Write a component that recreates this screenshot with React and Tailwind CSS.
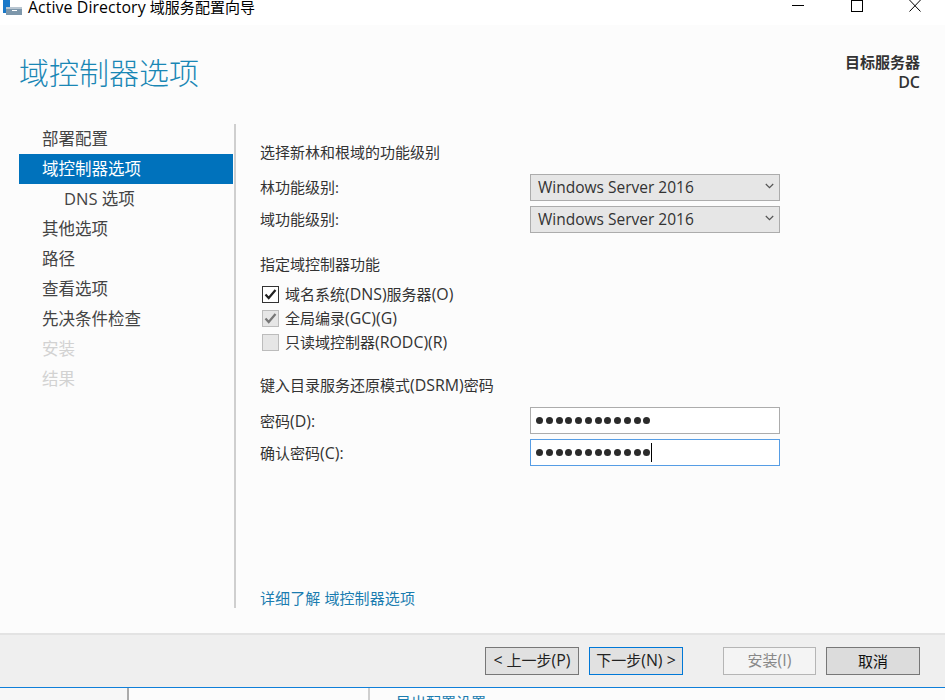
import React from 'react';

const FONT = 'font-["Open_Sans","Noto_Sans_CJK_SC",sans-serif]';

const navItems = [
  { label: '部署配置' },
  { label: '域控制器选项', active: true },
  { label: 'DNS 选项', sub: true },
  { label: '其他选项' },
  { label: '路径' },
  { label: '查看选项' },
  { label: '先决条件检查' },
  { label: '安装', disabled: true },
  { label: '结果', disabled: true },
];

// latin runs sit a little larger than the CJK around them in the original
const Mixed = ({ text }) =>
  text.split(/([\x21-\x7e]+(?: [\x21-\x7e]+)*)/).map((part, i) =>
    /[\x21-\x7e]/.test(part) ? (
      <span key={i} className="text-[1.06em]">{part}</span>
    ) : (
      part
    )
  );

const Chevron = () => (
  <svg width="9" height="6" viewBox="0 0 9 6" className="mr-[5px] mb-1" fill="none" stroke="#555" strokeWidth="1.2">
    <path d="M.8 1l3.7 3.7L8.2 1" />
  </svg>
);

const Select = ({ value }) => (
  <div className="w-[250px] h-[27px] flex items-center justify-between pl-[7px] bg-[#e6e6e6] border border-[#acacac] text-[15.5px] text-[#333]">
    <span>{value}</span>
    <Chevron />
  </div>
);

const Check = ({ label, state }) => {
  const box =
    state === 'on'
      ? 'bg-white border-[#333]'
      : 'bg-[#e6e6e6] border-[#bcbcbc]';
  return (
    <div className="h-6 flex items-center gap-[6px] text-[15px] text-[#333]">
      <div className={`w-[17px] h-[17px] ml-[1px] border flex items-center justify-center ${box}`}>
        {state !== 'off' && (
          <svg width="13" height="11" viewBox="0 0 13 11" fill="none" stroke={state === 'on' ? '#222' : '#777'} strokeWidth="2.2">
            <path d="M1.5 5.5l3.2 3.5 6.8-8" />
          </svg>
        )}
      </div>
      <span className="pt-[2px]"><Mixed text={label} /></span>
    </div>
  );
};

const Password = ({ focused }) => (
  <div className={`w-[250px] h-[27px] flex items-center pl-[5px] bg-white border ${focused ? 'border-[#569de5]' : 'border-[#acacac]'}`}>
    <div className="flex gap-[2.75px]">
      {Array.from({ length: 12 }).map((_, i) => (
        <span key={i} className="w-[7px] h-[7px] rounded-full bg-[#2b2b2b]" />
      ))}
    </div>
    {focused && <span className="w-px h-[19px] bg-black ml-[1px]" />}
  </div>
);

const Button = ({ className, children }) => (
  <div className={`h-[28px] flex items-center justify-center text-[15px] border ${className}`}>
    <span><Mixed text={children} /></span>
  </div>
);

export default function App() {
  return (
    <div className={`w-[945px] h-[700px] overflow-hidden flex flex-col bg-white ${FONT}`}>
      {/* title bar, cut off at the top */}
      <div className="h-[25px] shrink-0 bg-white flex items-start overflow-hidden">
        <svg width="20" height="16" viewBox="0 0 20 16" className="ml-[3px] shrink-0">
          <rect x="0" y="0" width="7" height="13" fill="#1a78c8" />
          <rect x="3" y="7" width="16" height="8" fill="#7d97ab" />
          <rect x="3" y="7" width="16" height="2" fill="#b9c6d1" />
          <rect x="9" y="10" width="5" height="1" fill="#fff" />
        </svg>
        <span className="ml-[5px] -mt-[3px] text-[15px] leading-5 text-black tracking-[0.07px]"><Mixed text="Active Directory 域服务配置向导" /></span>
        {/* window buttons */}
        <div className="ml-auto mr-[24px] w-[129px] h-full flex items-start justify-between">
          <span className="mt-[5px] w-3 h-px bg-black" />
          <span className="w-[12px] h-[12px] border border-black" />
          <svg width="12" height="12" viewBox="0 0 12 12" fill="none" stroke="#000">
            <path d="M.5 0l11 11.5M11.5 0L.5 11.5" />
          </svg>
        </div>
      </div>

      <div className="flex-1 bg-[#fcfcfc] flex flex-col min-h-0">
        {/* page heading */}
        <div className="h-[99px] shrink-0 flex justify-between pl-[19px] pr-[25px]">
          <h1 className="text-[30px] leading-10 mt-[28px] font-light text-[#1a87b5]">域控制器选项</h1>
          <div className="mt-[28px] text-right text-[15px] leading-[19px] font-semibold text-[#333]">
            <div>目标服务器</div>
            <div className="text-[16px] pt-px">DC</div>
          </div>
        </div>

        <div className="flex-1 flex min-h-0">
          {/* left nav */}
          <div className="w-[236px] shrink-0 pl-[19px] h-[484px] flex">
            <div className="w-[214px]">
              {navItems.map((item) => (
                <div
                  key={item.label}
                  className={`h-[30px] flex items-center text-[16.5px] ${item.sub ? 'pl-[45px]' : 'pl-[23px]'} ${
                    item.active ? 'bg-[#0072bc] text-white' : item.disabled ? 'text-[#d2d2d2]' : 'text-[#444]'
                  }`}
                >
                  <span className="pt-px">{item.label}</span>
                </div>
              ))}
            </div>
            <div className="w-[2px] ml-[1px] bg-[#cfcfcf]" />
          </div>

          {/* form */}
          <div className="flex-1 pl-[25px] text-[15px] text-[#333] flex flex-col h-[484px]">
            <div className="h-[20px] mt-[18px] -ml-px leading-5">选择新林和根域的功能级别</div>
            <div className="mt-[12px] flex items-center justify-between w-[519px]">
              <span className="-ml-px">林功能级别:</span>
              <Select value="Windows Server 2016" />
            </div>
            <div className="mt-[5px] flex items-center justify-between w-[519px]">
              <span className="-ml-px">域功能级别:</span>
              <Select value="Windows Server 2016" />
            </div>
            <div className="h-[20px] mt-[21px] -ml-px leading-5">指定域控制器功能</div>
            <div className="mt-[8px] flex flex-col">
              <Check label="域名系统(DNS)服务器(O)" state="on" />
              <Check label="全局编录(GC)(G)" state="partial" />
              <Check label="只读域控制器(RODC)(R)" state="off" />
            </div>
            <div className="h-[20px] mt-[21px] -ml-px leading-5"><Mixed text="键入目录服务还原模式(DSRM)密码" /></div>
            <div className="mt-[12px] flex items-center justify-between w-[519px]">
              <span className="-ml-px pt-[2px]"><Mixed text="密码(D):" /></span>
              <Password />
            </div>
            <div className="mt-[5px] flex items-center justify-between w-[519px]">
              <span className="-ml-px pt-[2px]"><Mixed text="确认密码(C):" /></span>
              <Password focused />
            </div>
            <div className="mt-auto -ml-px leading-5 text-[#1a7cb0] tracking-[0.1px]">详细了解 域控制器选项</div>
          </div>
        </div>
      </div>

      {/* wizard buttons */}
      <div className="h-[54px] shrink-0 bg-[#efefef] border-t-2 border-[#e3e3e3] flex items-center pl-[485px]">
        <Button className="w-[94px] bg-[#e1e1e1] border-[#777] text-[#222]">{'< 上一步(P)'}</Button>
        <Button className="w-[94px] ml-[10px] bg-[#e1e1e1] border-[#0078d7] text-[#222]">{'下一步(N) >'}</Button>
        <Button className="w-[93px] ml-[40px] bg-[#f4f4f4] border-[#b5b5b5] text-[#888]">安装(I)</Button>
        <Button className="w-[94px] ml-[10px] bg-[#dcdcdc] border-[#777] text-[#111]">取消</Button>
      </div>

      {/* background window peeking out */}
      <div className="h-[13px] shrink-0 border-t border-[#0f7fd9] bg-[#fcfcfc] flex overflow-hidden">
        <div className="w-[129px] bg-[#f7f7f7] border-r-2 border-[#ababab]" />
        <div className="w-[241px] border-r-2 border-[#cfcfcf]" />
        <span className="ml-[26px] mt-[4px] text-[15px] leading-5 text-[#1a7cb0]">导出配置设置</span>
      </div>
    </div>
  );
}
